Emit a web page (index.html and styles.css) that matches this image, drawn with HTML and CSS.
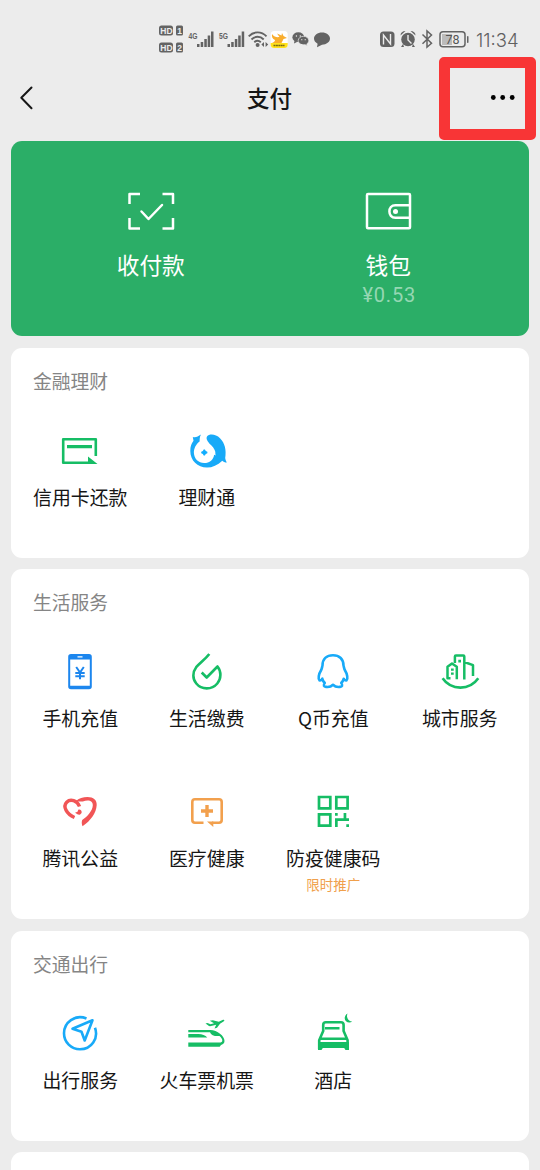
FILE: index.html
```html
<!DOCTYPE html>
<html lang="zh-CN">
<head>
<meta charset="utf-8">
<title>支付</title>
<link rel="stylesheet" href="styles.css">
</head>
<body>
<div class="screen">
  <div class="status">
    <svg class="status-left" width="175" height="32" viewBox="0 0 175 32">
      <g fill="#636363">
        <rect x="1" y="2.500" width="14" height="10" rx="2.500"/><rect x="18" y="2.500" width="7" height="10" rx="1.500"/>
        <rect x="1" y="19.500" width="14" height="10" rx="2.500"/><rect x="18" y="19.500" width="7" height="10" rx="1.500"/>
        <rect x="39" y="21" width="2.500" height="3"/><rect x="42.700" y="19" width="2.500" height="5"/><rect x="46.300" y="16" width="2.500" height="8"/><rect x="49.700" y="12.500" width="2.500" height="11.500"/><rect x="53" y="8.500" width="2.500" height="15.500"/>
        <rect x="69.500" y="21" width="2.500" height="3"/><rect x="73.200" y="19" width="2.500" height="5"/><rect x="76.800" y="16" width="2.500" height="8"/><rect x="80.200" y="12.500" width="2.500" height="11.500"/><rect x="83.700" y="8.500" width="2.500" height="15.500"/>
        <circle cx="99.600" cy="22" r="2"/>
        <path d="M106 19v5l-2.600-2.500zM107.600 19v5l2.600-2.500z"/>
        <ellipse cx="140.300" cy="14.200" rx="5.900" ry="4.900"/><path d="M136.500 17.500l-.5 3 3.500-1.800z"/>
        <path d="M145.500 13.300c3 0 5.300 1.900 5.300 4.300 0 1.400-.8 2.500-2 3.300l.4 1.800-2-1c-4 .6-7-1.400-7-4.100 0-2.400 2.300-4.300 5.300-4.300z" stroke="#ececec" stroke-width=".7"/>
        <path d="M164 9.500c4.500 0 8 2.700 8 6.100s-3.500 6.100-8 6.100l-5 2.500.6-3.500c-2.400-1.200-3.600-3-3.600-5.100 0-3.400 3.500-6.100 8-6.100z"/>
      </g>
      <g fill="none" stroke="#636363" stroke-width="1.900"><path d="M90.700 13.300c5-5.300 12.800-5.300 17.800 0M93.500 16.500c3.500-3.600 8.700-3.600 12.200 0M96.300 19.200c2-1.700 4.500-1.700 6.500 0"/></g>
      <rect x="112.700" y="8" width="17" height="17" rx="3.500" fill="#fff"/>
      <path d="M112.700 20h17v1.500q0 3.500-3.500 3.500h-10q-3.500 0-3.500-3.500z" fill="#ffe11b"/>
      <path d="M114 11c2 3 5 3.500 7.500 3l-2.500-3.500 4.500 2 .5-2.500 1.500 3 3.500 2-3.500 1-2 4h-9.500c2.500-1 3-2 3-3-2.500-1-3.500-3-3-6z" fill="#f9ad2d"/>
      <path d="M115.500 22.500h11" stroke="#776a12" stroke-width="1.400" stroke-dasharray="2 .4"/>
      <g fill="#ececec"><circle cx="138.400" cy="13" r=".7"/><circle cx="142.300" cy="13" r=".7"/><circle cx="143.800" cy="16.700" r=".6"/><circle cx="147.200" cy="16.700" r=".6"/></g>
      <g class="tiny" fill="#ececec"><text x="2.300" y="10.700">HD</text><text x="19.200" y="10.700">1</text><text x="2.300" y="27.700">HD</text><text x="19.200" y="27.700">2</text></g>
      <g class="net" fill="#636363"><text x="30.500" y="15.500" textLength="9" lengthAdjust="spacingAndGlyphs">4G</text><text x="61" y="15.500" textLength="9" lengthAdjust="spacingAndGlyphs">5G</text></g>
    </svg>
    <svg class="status-right" width="90" height="20" viewBox="0 0 90 20">
      <g fill="#636363">
        <rect x="1" y="2.500" width="14.500" height="15.500" rx="3.500"/>
        <circle cx="29" cy="10.500" r="6.800"/>
        <path d="M21.500 6.500c0-3 2-4.500 5-4.500zM36.500 6.500c0-3-2-4.500-5-4.500zM24 15l-2 3h3zM34 15l2 3h-3z"/>
        <rect x="63" y="5" width="10" height="11" fill="#bbb"/>
        <rect x="88" y="7" width="1.500" height="7" rx=".7"/>
      </g>
      <g fill="none" stroke="#ececec" stroke-width="1.400"><path d="M4.500 15.500V6l7 9V5"/><path d="M29 6v5l3.500 3.500"/></g>
      <g fill="none" stroke="#636363" stroke-width="1.500"><path d="M43.500 5.500l9 8.700-4.500 4V2l4.500 4-9 8.700"/><rect x="61" y="2.800" width="25" height="15" rx="3"/></g>
      <text class="battery" x="66.500" y="14.800">78</text>
    </svg>
    <span class="clock">11:34</span>
  </div>

  <header class="nav">
    <svg width="20" height="26" viewBox="0 0 20 26" fill="none" stroke="#161616" stroke-width="2" stroke-linecap="round" stroke-linejoin="round"><path d="M12.500 2.500L2.300 12.800 12.500 23.300"/></svg>
    <h1>支付</h1>
    <svg width="26" height="8" viewBox="0 0 26 8"><circle cx="3.300" cy="3.500" r="2.400"/><circle cx="12.700" cy="3.500" r="2.400"/><circle cx="22.200" cy="3.500" r="2.400"/></svg>
    <div class="highlight"></div>
  </header>

  <section class="hero">
    <div class="hero-item">
      <svg width="48" height="40" viewBox="0 0 48 40" fill="none" stroke="#fff" stroke-width="2.500" stroke-linejoin="round"><path d="M2.500 13V3h10.500M35.500 3H46v10M46 27v10.500H35.500M13 37.500H2.500V27"/><path stroke-linecap="round" d="M14.500 20.500l7 7.500L35 14"/></svg>
      <span>收付款</span>
    </div>
    <div class="hero-item">
      <svg width="48" height="40" viewBox="0 0 48 40" fill="none" stroke="#fff" stroke-width="2.500" stroke-linejoin="round"><rect x="3" y="3" width="43" height="34.300" rx="1"/><path d="M46 14.200H31.400c-8 0-8 12.600 0 12.600H46"/><circle cx="31.500" cy="20.500" r="2.500" fill="#fff" stroke="none"/></svg>
      <span>钱包</span>
      <small>¥0.53</small>
    </div>
  </section>

  <section class="card">
    <h2>金融理财</h2>
    <div class="grid">
      <div class="item">
        <svg viewBox="0 0 44 44" class="green"><path class="line" d="M37.800 27V10.200H5.200v23.600H31"/><path d="M9 16h25v3.200H9zM30 27.500l9.500 7.500H30z"/></svg>
        <span>信用卡还款</span>
      </div>
      <div class="item">
        <svg viewBox="0 0 44 44" class="sky"><path d="M7.800 8c2.700 1 5-.3 8.200-2.400-1.500 2.500-1.200 4.600-1.400 6.800C11 15 8.700 19.500 8.900 24c.3 5.800 4.600 10 10.200 10s9.600-3.500 10-8.300l1.600.7c-.8-2 .3-3.200-1.200-5.700-1.300-3.500-4.500-4.800-6.800-8.500-1.300-2.300-1.400-3.500-.7-4.700 2.600-3.300 9-2.300 13 1.700 5 5 6.500 12 5.200 19.800.2 1.600 1 3.300 1.600 4.500-2 0-3.400-.8-4.500-1.800C32.500 36 27.500 38.600 22 38.600 12.500 38.600 5.300 31.500 5.300 22c0-4.700 1-7.500 3.200-10.300z"/><path d="M19.300 20.700c.3 1.700 1.300 2.600 3 2.800-1.700.2-2.700 1.100-3 2.800-.3-1.700-1.300-2.600-3-2.800 1.700-.2 2.700-1.100 3-2.800z" stroke="#10aeff" stroke-width="1.300"/></svg>
        <span>理财通</span>
      </div>
    </div>
  </section>

  <section class="card">
    <h2>生活服务</h2>
    <div class="grid">
      <div class="item">
        <svg viewBox="0 0 44 44" class="blue"><path fill-rule="evenodd" d="M13 4h18q2.800 0 2.800 2.800v29.700q0 2.800-2.800 2.800H13q-2.800 0-2.800-2.800V6.800Q10.200 4 13 4zM12.200 9.500v26.200h19.600V9.500zM19.500 6.300v1.200h5V6.300z"/><path class="line thin" d="M18.200 17l3.800 5.500 3.800-5.500M22 22.500v6.700M17.300 23h9.400M17.300 26.200h9.400"/></svg>
        <span>手机充值</span>
      </div>
      <div class="item">
        <svg viewBox="0 0 44 44" class="green"><path class="line" d="M24.300 4C20 9.500 15.500 12.300 11.200 17.200 7.500 22 7.300 29 11.300 33.500c5.300 6.500 15.500 6.500 21 0 4-4.800 4.200-12 .2-17L21.700 27.500l-5-5"/></svg>
        <span>生活缴费</span>
      </div>
      <div class="item">
        <svg viewBox="0 0 44 44" class="sky"><path class="line" d="M22 5.200c-6.500 0-10.500 4-10.500 10.300-.5 1.700-.5 2.700-1.300 4.500-2.500 4-3.400 9-1.700 10.400 1 .4 2-.5 2.800-1.700.4 2 1.500 3.300 2.500 4.300-4 4.500 4.600 5.300 8.200 1.800 3.600 3.500 12.200 2.700 8.200-1.800 1-1 2.100-2.300 2.500-4.300.8 1.200 1.800 2.100 2.800 1.700 1.700-1.400.8-6.400-1.700-10.400-.8-1.800-.8-2.800-1.300-4.500C32.500 9.200 28.500 5.200 22 5.200z"/></svg>
        <span>Q币充值</span>
      </div>
      <div class="item">
        <svg viewBox="0 0 44 44" class="green"><path class="line" d="M4.600 28.300c8.500 12.400 27 12.400 35.700 0"/><path class="line city" d="M12.500 28.300H9.500V16.800l4.500-3.300 4.800 3.300v12.500M16.900 13V6.500q0-1 1-1h7.400q1 0 1 1v23M26.300 12l8.700 3.200V26"/><path d="M20.300 9.700h2.700v2.700h-2.700zM13 18.500h2.700v2.300H13zM13 22.500h2.700v2.300H13z"/></svg>
        <span>城市服务</span>
      </div>
      <div class="item">
        <svg viewBox="0 1 44 44" class="red"><path class="line ribbon" d="M16.500 28.500C8.500 25 4.500 17.500 8.700 13.200c3.800-3.800 10.500-1.700 12.800 4.300"/><path d="M17.500 12.500c3.500-3.500 7.500-4.500 12-4.500 6 0 9.500 3 9.200 8-.5 8-5.700 15.500-14.200 21.300-.9-2.400-1-4.300-.3-6.300 5.500-3.500 10.300-9.500 10.600-14.500.2-4.500-4-6.200-10-4z"/><path d="M17 23.700l2.500-1 .8-2c2.200-.5 3.800 1 3.300 3.200l-1.700 1.900-2-.2z"/></svg>
        <span>腾讯公益</span>
      </div>
      <div class="item">
        <svg viewBox="0 1 44 44" class="orange"><path class="line" d="M18.500 33.700H10q-2.700 0-2.700-2.700V13q0-2.700 2.700-2.700h24q2.700 0 2.700 2.700v18q0 2.700-2.700 2.700h-7"/><path d="M20.300 16h3.400v4.300H28v3.400h-4.300V28h-3.400v-4.300H16v-3.400h4.300zM22 32.500h6.300V38z"/></svg>
        <span>医疗健康</span>
      </div>
      <div class="item">
        <svg viewBox="0 1 44 44" class="green"><path class="line square" d="M8 8h11.300v11.300H8zM25.300 8h11.300v11.300H25.300zM8 25.300h11.300v11.300H8z"/><path d="M24 24h2.700v2.700H24zM24 29.300h8.600V24h2.700v8H26.700v6H24zM35.300 29.300H38V32h-2.700zM35.300 35.300H38V38h-2.700z"/></svg>
        <span>防疫健康码</span>
        <small>限时推广</small>
      </div>
    </div>
  </section>

  <section class="card">
    <h2>交通出行</h2>
    <div class="grid">
      <div class="item">
        <svg viewBox="0 1 44 44" class="sky"><path class="line" d="M28.500 7.500C17 3 6 11.500 6 22.300c0 9 7.200 16 16 16 11.500 0 18.800-11 15-21.500"/><path class="line" d="M34.500 9.200L14.500 17.700l9 3 3.200 8.800z"/></svg>
        <span>出行服务</span>
      </div>
      <div class="item">
        <svg viewBox="0 1 44 44" class="green"><path d="M3.300 19h22c7 0 14.200 6 14.200 11 0 2.800-2 3.500-3.500 4l-1.300 1.800H3.300V31.600h31c2-.2 3-.8 3-2.200 0-1.400-1.200-3-2.800-4.400-4.500.5-8.500-.7-9.500-3.800H3.300z"/><path d="M3.300 23h10c4 0 7 1.300 9 3.500h-19zM20.500 12.500l2-.5 3 1.300 3.500-1-4.200-2.500 3-.5 6 1.500 3.700-1.800c2-.8 2.500.5 1 1.500l-3.500 2.300-3 4-2.500.6 1.700-3.600-5.200 1.300q-2 .4-3-.8z"/></svg>
        <span>火车票机票</span>
      </div>
      <div class="item">
        <svg viewBox="0 1 44 44" class="green"><path class="line" d="M8.200 38V29.200l4-9.200v-6q0-2.700 2.700-2.700h15q2.700 0 2.700 2.700v6l4 9.200V38M14 17.200h14.500M8.200 27.700h28.400"/><path d="M7 31h31v8h-3.500l-1.300-2H11.800l-1.300 2H7zM36.500 2.500c-1.500 3.800.5 7.500 4.700 8.300-3.500 2-7.500 0-7.500-3.500 0-2 1-3.800 2.800-4.800z"/></svg>
        <span>酒店</span>
      </div>
    </div>
  </section>
  <section class="card"></section>
</div>
</body>
</html>
```
FILE: styles.css
```css
* { box-sizing: border-box; }
body {
  margin: 0;
  background: #ececec;
  color: #161616;
  font-family: "Noto Sans CJK SC", sans-serif;
}
.screen {
  height: 1170px;
  overflow: hidden;
  padding: 0 11px;
}
h1, h2 { margin: 0; font-weight: 400; }
svg { display: block; flex: none; }

.status {
  height: 57px;
  padding: 23px 10px 0 147px;
  display: flex;
  align-items: flex-start;
}
.status-right { margin: 6px 0 0 46px; }
.clock {
  margin: 5px 0 0 7px;
  font: 300 18.500px/24px Inter, sans-serif;
  color: #606060;
  white-space: nowrap;
}
.tiny { font: 700 8.500px "Liberation Sans", sans-serif; }
.net { font: 700 9.500px "Liberation Sans", sans-serif; }
.battery { font: 400 12.500px Roboto, sans-serif; fill: #555; }

.nav {
  position: relative;
  height: 83.500px;
  padding: 0 13px 2px 8px;
  display: flex;
  align-items: center;
  justify-content: space-between;
}
.nav h1 { padding: 0 0 2px 10px; font-size: 22.500px; font-weight: 500; line-height: 32px; }
.highlight {
  position: absolute;
  top: 0;
  right: -7px;
  width: 97px;
  height: 83px;
  border: 11.500px solid #f83536;
  border-radius: 5px;
}

.hero {
  height: 195.500px;
  padding: 50px 22px 0 21px;
  display: grid;
  grid-template-columns: 1fr 1fr;
  border-radius: 11px;
  background: #2bae67;
  color: #fff;
}
.hero-item { display: flex; flex-direction: column; align-items: center; }
.hero-item span { margin-top: 17px; font-size: 22.700px; line-height: 34px; }
.hero-item small {
  margin-top: 1px;
  padding-left: 2px;
  font: 20px/24px Roboto, "Noto Sans CJK SC", sans-serif;
  letter-spacing: .8px;
  color: #95d7b3;
}

.card {
  margin-top: 11.500px;
  padding: 19px 6px 0;
  min-height: 210px;
  border-radius: 11px;
  background: #fff;
}
.card h2 {
  padding-left: 16px;
  font-size: 18.800px;
  line-height: 28px;
  color: #858585;
}
.grid {
  display: grid;
  grid-template-columns: repeat(4, 1fr);
  grid-auto-rows: 129px;
  row-gap: 11px;
  padding-top: 34px;
}
.item { display: flex; flex-direction: column; align-items: center; }
.item svg { width: 44px; height: 44px; fill: currentColor; }
.item span { margin-top: 10px; font-size: 18.900px; line-height: 28px; white-space: nowrap; }
.item small { margin-top: 2px; font-size: 13.500px; line-height: 20px; color: #f0a04b; }

.line {
  fill: none;
  stroke: currentColor;
  stroke-width: 2.600;
  stroke-linejoin: round;
}
.thin { stroke-width: 2; }
.city { stroke-width: 2.500; }
.ribbon { stroke-width: 3.400; }
.square { stroke-width: 2.700; stroke-linejoin: miter; }
.green { color: #16bd65; }
.sky { color: #18aaf8; }
.blue { color: #1c86ee; }
.red { color: #f15556; }
.orange { color: #f2a04d; }
```
